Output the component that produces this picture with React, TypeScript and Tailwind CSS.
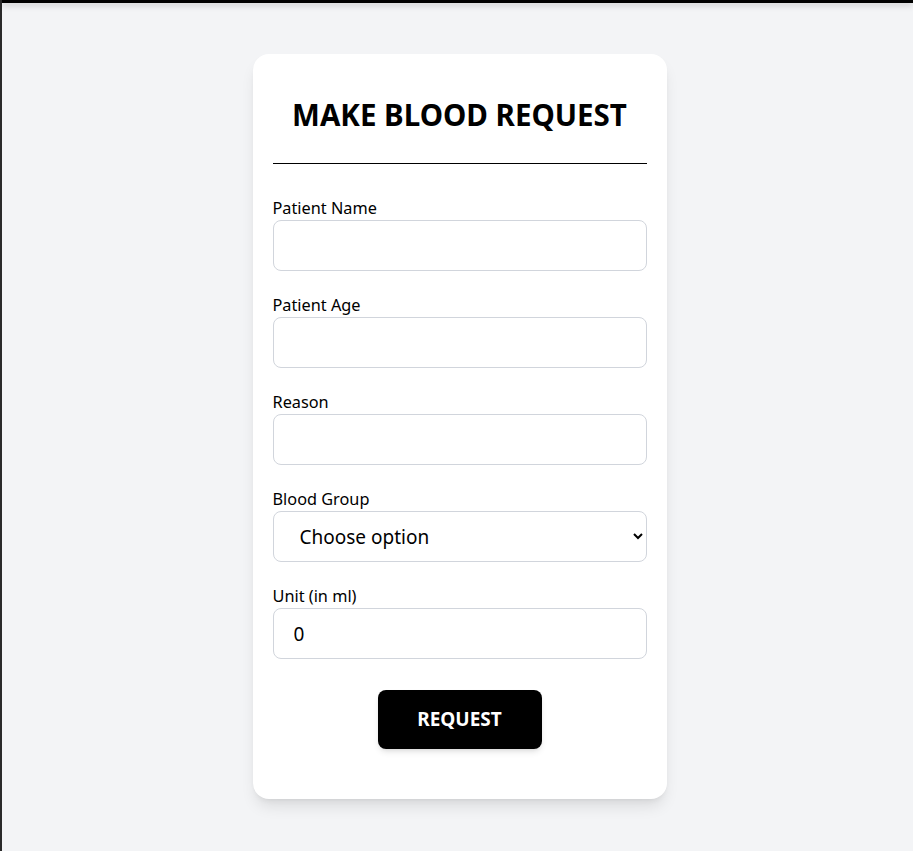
import { useState } from 'react'

const inputCls =
    'block h-[51px] w-full rounded-lg border border-gray-300 bg-white px-5 text-[19px] text-black outline-none focus:border-gray-400'

// COMPONENT: BLOOD REQUEST FORM
const App = () => {
    const [form, setForm] = useState({ name: '', age: '', reason: '', group: '', unit: '0' })

    const set = (k: keyof typeof form) => (e: { target: { value: string } }) =>
        setForm({ ...form, [k]: e.target.value })

    return (
        <div className="min-h-screen border-l-2 border-[#2a2a2a] bg-gray-100 font-['Noto_Sans',sans-serif] text-black">
            <div className="h-[3px] bg-black shadow-[0_2px_6px_rgba(0,0,0,0.25)]" />
            <div className="flex justify-center pt-[51px] pb-12 pl-[4px]">
                <div className="w-[414px] rounded-2xl bg-white px-5 pt-[40px] pb-[50px] shadow-lg">
                    <h1 className="text-center text-[29.5px] leading-[42px] font-bold">MAKE BLOOD REQUEST</h1>
                    <hr className="mt-[27px] border-t border-black" />

                    <form className="mt-[32px] flex flex-col gap-[22px]" onSubmit={(e) => e.preventDefault()}>
                        <div>
                            <label htmlFor="name" className="block text-[16.3px] leading-6">Patient Name</label>
                            <input id="name" type="text" className={inputCls} value={form.name} onChange={set('name')} />
                        </div>
                        <div>
                            <label htmlFor="age" className="block text-[16.3px] leading-6">Patient Age</label>
                            <input id="age" type="text" className={inputCls} value={form.age} onChange={set('age')} />
                        </div>
                        <div>
                            <label htmlFor="reason" className="block text-[16.3px] leading-6">Reason</label>
                            <input id="reason" type="text" className={inputCls} value={form.reason} onChange={set('reason')} />
                        </div>
                        <div>
                            <label htmlFor="group" className="block text-[16.3px] leading-6">Blood Group</label>
                            <select id="group" className={inputCls + ' h-[50px] pl-[22px]'} value={form.group} onChange={set('group')}>
                                <option value="">Choose option</option>
                                <option>A+</option>
                                <option>A-</option>
                                <option>B+</option>
                                <option>B-</option>
                                <option>AB+</option>
                                <option>AB-</option>
                                <option>O+</option>
                                <option>O-</option>
                            </select>
                        </div>
                        <div>
                            <label htmlFor="unit" className="block text-[16.3px] leading-6">Unit (in ml)</label>
                            <input id="unit" type="number" className={inputCls} value={form.unit} onChange={set('unit')} />
                        </div>

                        <div className="mt-[9px] flex justify-center">
                            <button
                                type="submit"
                                className="h-[59px] w-[164px] rounded-lg bg-black text-[19px] font-bold text-white shadow-md"
                            >
                                REQUEST
                            </button>
                        </div>
                    </form>
                </div>
            </div>
        </div>
    )
}

export default App
